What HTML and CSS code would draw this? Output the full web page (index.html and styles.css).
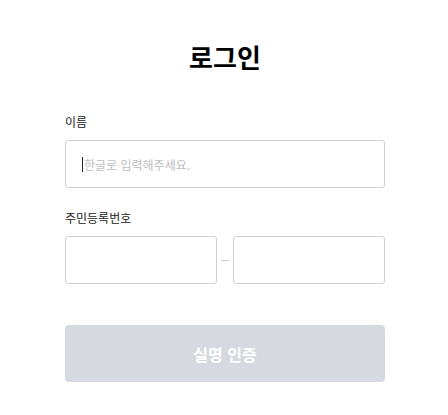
FILE: index.html
```html
<!DOCTYPE html>
<html lang="ko">
<head>
<meta charset="utf-8">
<link rel="stylesheet" href="styles.css">
</head>
<body>
<main class="page">
  <h1 class="title">로그인</h1>
  <div class="field">
    <label class="label">이름</label>
    <div class="input input-full"><span class="caret"></span><span class="placeholder">한글로 입력해주세요.</span></div>
  </div>
  <div class="field">
    <label class="label">주민등록번호</label>
    <div class="row">
      <div class="input input-half"></div>
      <span class="dash"></span>
      <div class="input input-half"></div>
    </div>
  </div>
  <button class="btn">실명 인증</button>
</main>
</body>
</html>
```
FILE: styles.css
```css
html, body {
  margin: 0;
  padding: 0;
  background: #fff;
}
body {
  font-family: "Noto Sans CJK KR", "Noto Sans", sans-serif;
  color: #111;
  padding-left: 2px;
}
.page {
  width: 320px;
  margin: 0 auto;
  padding-top: 38px;
  display: flex;
  flex-direction: column;
}
.title {
  margin: 0;
  text-align: center;
  font-size: 26px;
  font-weight: 700;
  line-height: 38px;
  color: #000;
}
.field {
  display: flex;
  flex-direction: column;
}
.field:first-of-type {
  margin-top: 37px;
}
.field + .field {
  margin-top: 21px;
}
.label {
  font-size: 12px;
  line-height: 18px;
  color: #222;
  margin-bottom: 9px;
}
.input {
  box-sizing: border-box;
  height: 48px;
  border: 1px solid #cfcfcf;
  border-radius: 3px;
  background: #fff;
  display: flex;
  align-items: center;
  padding-left: 16px;
}
.input-full {
  width: 320px;
}
.caret {
  width: 1px;
  height: 15px;
  background: #222;
  margin-right: 1px;
}
.placeholder {
  font-size: 12px;
  color: #bdbdbd;
}
.row {
  display: flex;
  align-items: center;
}
.input-half {
  width: 152px;
}
.dash {
  width: 7px;
  height: 1px;
  background: #c8c8c8;
  margin: 0 4px 0 5px;
}
.btn {
  margin-top: 41px;
  height: 57px;
  width: 320px;
  border: none;
  border-radius: 4px;
  background: #d6dae0;
  color: #fff;
  font-family: "Noto Sans CJK KR", "Noto Sans", sans-serif;
  font-size: 16px;
  font-weight: 700;
}
```
